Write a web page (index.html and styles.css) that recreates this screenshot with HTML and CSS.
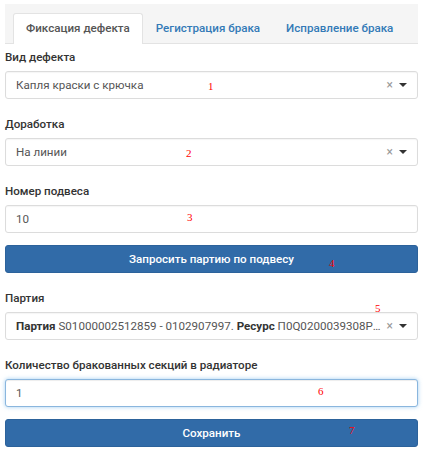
FILE: index.html
```html
<!DOCTYPE html>
<html lang="ru">
<head>
<meta charset="utf-8">
<link rel="stylesheet" href="styles.css">
</head>
<body>
<div class="page">
  <div class="tabs">
    <div class="tab active">Фиксация дефекта</div>
    <div class="tab">Регистрация брака</div>
    <div class="tab">Исправление брака</div>
  </div>

  <div class="field">
    <div class="label">Вид дефекта</div>
    <div class="select">
      <span class="value">Капля краски с крючка</span>
      <span class="clear">×</span><span class="arrow"></span>
    </div>
    <span class="mark m1">1</span>
  </div>

  <div class="field">
    <div class="label">Доработка</div>
    <div class="select">
      <span class="value">На линии</span>
      <span class="clear">×</span><span class="arrow"></span>
    </div>
    <span class="mark m2">2</span>
  </div>

  <div class="field">
    <div class="label">Номер подвеса</div>
    <div class="input">10</div>
    <span class="mark m3">3</span>
  </div>

  <div class="btn-row">
    <div class="btn">Запросить партию по подвесу</div>
    <span class="mark m4">4</span>
  </div>

  <div class="field">
    <div class="label">Партия</div>
    <div class="select">
      <span class="value"><b>Партия</b> S01000002512859 - 0102907997. <b>Ресурс</b> П0Q0200039308P0001</span>
      <span class="clear tight">×</span><span class="arrow"></span>
    </div>
    <span class="mark m5">5</span>
  </div>

  <div class="field">
    <div class="label">Количество бракованных секций в радиаторе</div>
    <div class="input focus">1</div>
    <span class="mark m6">6</span>
  </div>

  <div class="btn-row">
    <div class="btn">Сохранить</div>
    <span class="mark m7">7</span>
  </div>
</div>
</body>
</html>
```

FILE: styles.css
```css
html, body {
  margin: 0;
  padding: 0;
  background: #fff;
}
body {
  font-family: Roboto, "Liberation Sans", Arial, sans-serif;
  font-size: 11.6px;
  color: #333;
}
.page {
  padding: 4px 5px 0 5px;
}
.tabs {
  display: flex;
  background: #f5f5f5;
  border-bottom: 1px solid #e3e3e3;
  padding: 9px 0 0 8px;
  height: 30px;
}
.tab {
  padding: 0 12px;
  line-height: 29px;
  height: 30px;
  box-sizing: border-box;
  white-space: nowrap;
  color: #337ab7;
  font-weight: 500;
  border: 1px solid transparent;
  border-bottom: none;
}
.tab.active {
  background: #fff;
  color: #555;
  border-color: #e3e3e3;
  border-radius: 3px 3px 0 0;
  margin-bottom: -1px;
  height: 31px;
}
.field {
  position: relative;
  margin-top: 16px;
}
.tabs + .field {
  margin-top: 4px;
}
.label {
  line-height: 18px;
  font-weight: 500;
  color: #333;
  margin-bottom: 5px;
}
.select, .input {
  height: 28px;
  box-sizing: border-box;
  border: 1px solid #dcdcdc;
  border-radius: 3px;
  background: #fff;
  display: flex;
  align-items: center;
  padding: 0 8px 0 10px;
  color: #555;
  box-shadow: inset 0 1px 1px rgba(0,0,0,0.04);
}
.select .value {
  flex: 1;
  min-width: 0;
  white-space: nowrap;
  overflow: hidden;
  text-overflow: ellipsis;
}
.select .value b {
  color: #333;
  font-weight: 700;
}
.clear {
  color: #999;
  font-size: 12px;
  margin: 0 6px 0 6px;
}
.clear.tight {
  margin-left: 0;
}
.arrow {
  width: 0;
  height: 0;
  border-left: 4px solid transparent;
  border-right: 4px solid transparent;
  border-top: 4px solid #333;
  margin-right: 2px;
}
.input.focus {
  border-color: #8ab6de;
  box-shadow: inset 0 1px 1px rgba(0,0,0,.075), 0 0 4px rgba(102,175,233,.6);
}
.btn-row {
  position: relative;
  margin-top: 12px;
}
.btn {
  height: 28px;
  box-sizing: border-box;
  background: #316ba8;
  border: 1px solid #2c629b;
  border-radius: 3px;
  color: #fff;
  font-weight: 500;
  display: flex;
  align-items: center;
  justify-content: center;
}
.mark {
  position: absolute;
  font-family: "Liberation Serif", serif;
  font-size: 11px;
  color: #f00;
  line-height: 12px;
}
.m1 { left: 203px; top: 32px; }
.m2 { left: 181px; top: 32px; }
.m3 { left: 182px; top: 29px; }
.m4 { left: 324px; top: 12px; }
.m5 { left: 370px; top: 13px; }
.m6 { left: 313px; top: 29px; }
.m7 { left: 344px; top: 5px; }
```
